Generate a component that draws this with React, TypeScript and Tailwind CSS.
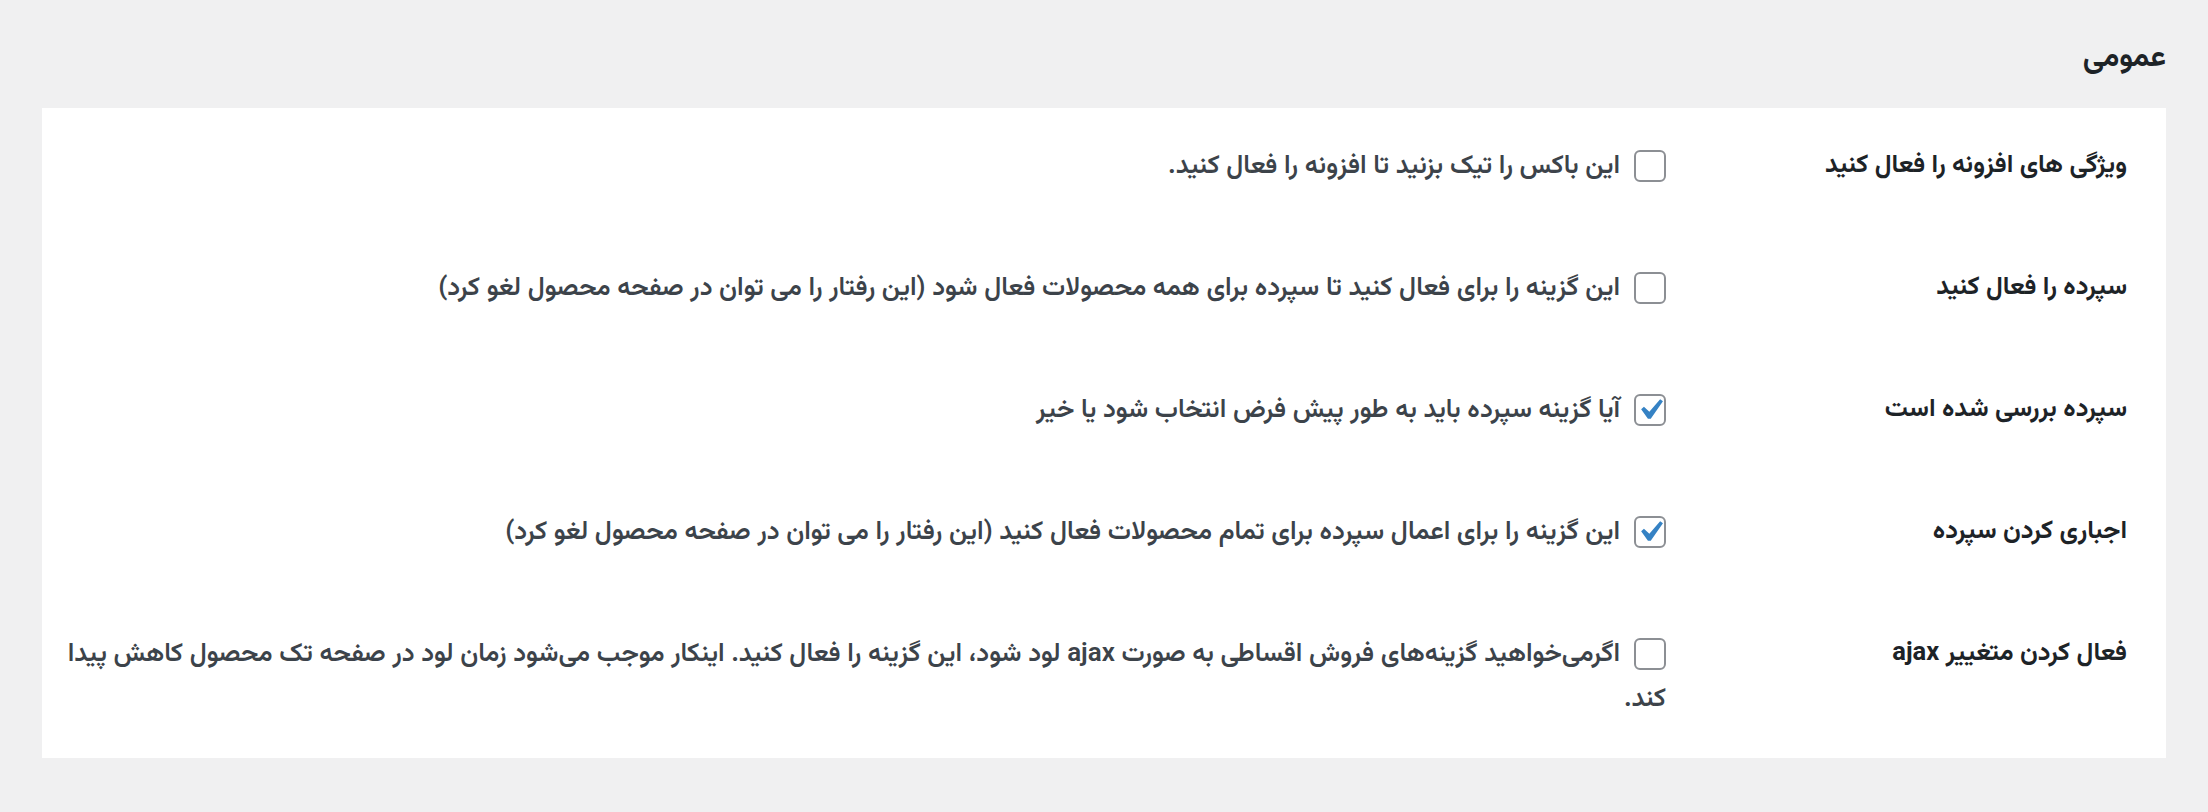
import React from 'react'

const rows = [
  {
    label: 'ویژگی های افزونه را فعال کنید',
    text: 'این باکس را تیک بزنید تا افزونه را فعال کنید.',
    checked: false
  },
  {
    label: 'سپرده را فعال کنید',
    text: 'این گزینه را برای فعال کنید تا سپرده برای همه محصولات فعال شود (این رفتار را می توان در صفحه محصول لغو کرد)',
    checked: false
  },
  {
    label: 'سپرده بررسی شده است',
    text: 'آیا گزینه سپرده باید به طور پیش فرض انتخاب شود یا خیر',
    checked: true
  },
  {
    label: 'اجباری کردن سپرده',
    text: 'این گزینه را برای اعمال سپرده برای تمام محصولات فعال کنید (این رفتار را می توان در صفحه محصول لغو کرد)',
    checked: true
  },
  {
    label: 'فعال کردن متغییر ajax',
    text: 'اگرمی‌خواهید گزینه‌های فروش اقساطی به صورت ajax لود شود، این گزینه را فعال کنید. اینکار موجب می‌شود زمان لود در صفحه تک محصول کاهش پیدا کند.',
    checked: false
  }
]

// چک باکس به سبک وردپرس (دو برابر)
const Checkbox = ({ checked }: { checked: boolean }) => (
  <span className="ml-[14px] mt-[6px] inline-flex h-[32px] w-[32px] items-center justify-center rounded-[6px] border-2 border-[#8c8f94] bg-white align-top">
    {checked && (
      <svg viewBox="0 0 20 20" className="h-[42px] w-[42px] shrink-0">
        <path
          d="M14.83 4.89l1.34.94-5.81 8.38H9.02L5.78 9.67l1.34-1.25 2.57 2.4z"
          fill="#3582c4"
        />
      </svg>
    )}
  </span>
)

const App = () => {
  return (
    <div
      dir="rtl"
      className="min-h-[812px] bg-[#f0f0f1] px-[42px] pb-[56px] pt-[40px]"
      style={{ fontFamily: '"Vazirmatn", "Noto Sans Arabic", "DejaVu Sans", sans-serif' }}
    >
      <h2 className="mb-[31px] h-[37px] text-[30px] font-bold leading-[37px] text-[#1d2327]">
        عمومی
      </h2>

      <div className="bg-white pb-[36px] pl-[22px] pr-[39px] pt-[36px]">
        {rows.map((row, i) => (
          <div key={i} className="flex items-start pb-[77px] last:pb-0">
            <div className="w-[461px] shrink-0 text-[25.5px] font-bold leading-[45px] text-[#1d2327]">
              {row.label}
            </div>
            <label className="block flex-1 text-[26px] font-semibold leading-[45px] text-[#3c434a]">
              <Checkbox checked={row.checked} />
              {row.text}
            </label>
          </div>
        ))}
      </div>
    </div>
  )
}

export default App
